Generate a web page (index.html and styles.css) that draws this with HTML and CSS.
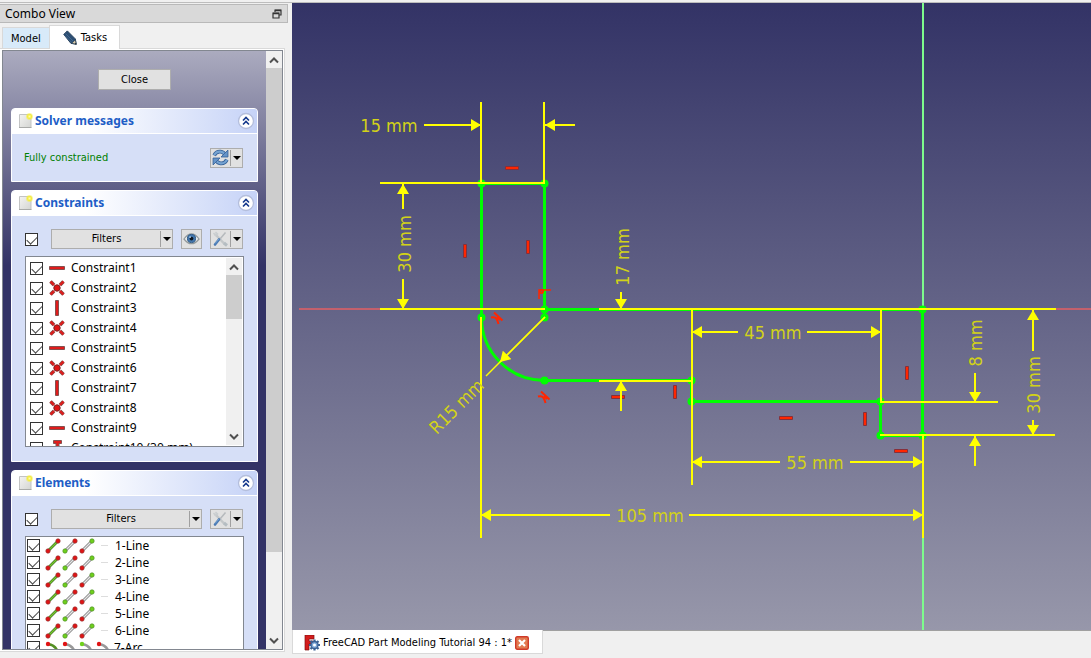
FILE: index.html
```html
<!DOCTYPE html>
<html lang="en">
<head>
<meta charset="utf-8">
<title>FreeCAD</title>
<link rel="stylesheet" href="styles.css">
</head>
<body>
<svg class="defs" aria-hidden="true">
  <defs>
    <linearGradient id="paper" x1="0" y1="0" x2="1" y2="1"><stop offset="0" stop-color="#f4f4f2"/><stop offset="1" stop-color="#d4d5d2"/></linearGradient>
    <radialGradient id="glow"><stop offset="0" stop-color="#fffbb0"/><stop offset=".5" stop-color="#f6ee3c"/><stop offset="1" stop-color="#f6ee3c" stop-opacity="0"/></radialGradient>
    <symbol id="i-page" viewBox="0 0 16 16"><path d="M1.500 1.500h11.500v13h-11.500z" fill="url(#paper)" stroke="#c3c4c4"/><path d="M1 14.500h12.500" stroke="#a9aaa8"/><circle cx="11.500" cy="3.500" r="4" fill="url(#glow)"/></symbol>
    <symbol id="i-up" viewBox="0 0 18 18"><circle cx="9" cy="9" r="7.500" fill="#fff" stroke="#b4bedc" stroke-width="1.300"/><path d="M6 8.500l3-3 3 3M6 12.500l3-3 3 3" fill="none" stroke="#14388c" stroke-width="1.600"/></symbol>
    <symbol id="i-h" viewBox="0 0 16 16"><path d="M.5 6.500h15v3h-15z" fill="#e01c1c" stroke="#85504f"/></symbol>
    <symbol id="i-v" viewBox="0 0 16 16"><path d="M6.500.5v15h3v-15z" fill="#e01c1c" stroke="#85504f"/></symbol>
    <symbol id="i-x" viewBox="0 0 16 16"><path d="M1.500 1.500l3.500 3.500M14.500 1.500l-3.500 3.500M1.500 14.500l3.500-3.500M14.500 14.500l-3.500-3.500" stroke="#8a4643" stroke-width="3.600"/><path d="M1.500 1.500l3.500 3.500M14.500 1.500l-3.500 3.500M1.500 14.500l3.500-3.500M14.500 14.500l-3.500-3.500" stroke="#e01c1c" stroke-width="2"/><circle cx="8" cy="8" r="3.200" fill="#e01414" stroke="#752222"/></symbol>
    <symbol id="i-t" viewBox="0 0 16 16"><path d="M4.500 .5h8v3h-2.500v11h-3v-11h-2.500z" fill="#e01c1c" stroke="#85504f"/></symbol>
    <symbol id="l-edge" viewBox="0 0 16 16"><path d="M3 13L13 3" stroke="#3c6a20" stroke-width="2.600"/><path d="M3 13L13 3" stroke="#76c82c" stroke-width="1.400"/><g fill="#e01414" stroke="#963434" stroke-width=".7"><circle cx="3" cy="13" r="2.200"/><circle cx="13" cy="3" r="2.200"/></g></symbol>
    <symbol id="l-start" viewBox="0 0 16 16"><path d="M3 13L13 3" stroke="#858585" stroke-width="3"/><path d="M3 13L13 3" stroke="#e6e6e6" stroke-width="1.300"/><circle cx="3" cy="13" r="2.200" fill="#6fd01c" stroke="#4f8e28" stroke-width=".7"/><circle cx="13" cy="3" r="2.200" fill="#e01414" stroke="#963434" stroke-width=".7"/></symbol>
    <symbol id="l-end" viewBox="0 0 16 16"><path d="M3 13L13 3" stroke="#858585" stroke-width="3"/><path d="M3 13L13 3" stroke="#e6e6e6" stroke-width="1.300"/><circle cx="3" cy="13" r="2.200" fill="#e01414" stroke="#963434" stroke-width=".7"/><circle cx="13" cy="3" r="2.200" fill="#6fd01c" stroke="#4f8e28" stroke-width=".7"/></symbol>
    <symbol id="a-edge" viewBox="0 0 16 16"><path d="M3 4q8 1 10 9" fill="none" stroke="#548f24" stroke-width="2.500"/><circle cx="3" cy="4" r="2.200" fill="#e01414"/></symbol>
    <symbol id="a-red" viewBox="0 0 16 16"><path d="M3 4q8 1 10 9" fill="none" stroke="#999" stroke-width="2.500"/><circle cx="3" cy="4" r="2.200" fill="#e01414"/></symbol>
    <symbol id="a-green" viewBox="0 0 16 16"><path d="M3 4q8 1 10 9" fill="none" stroke="#999" stroke-width="2.500"/><circle cx="3" cy="4" r="2.200" fill="#6fd01c"/></symbol>
    <symbol id="i-tools" viewBox="0 0 16 16"><path d="M3 3l10 10.500" stroke="#c3c7c9" stroke-width="2.500"/><path d="M1.500 2l2 2.500 2-1.500-2-2" fill="none" stroke="#c9cdcf" stroke-width="1.500"/><path d="M12 12l3 2.500" stroke="#b5bdc2" stroke-width="3"/><path d="M8 8l5.500-6.500" stroke="#b6babd" stroke-width="1.500"/><path d="M3 13.500l4-5" stroke="#4a7ab4" stroke-width="2.600" stroke-linecap="round"/><path d="M3 12.500l4-4.500" stroke="#83add8" stroke-width=".8"/></symbol>
    <symbol id="i-down" viewBox="0 0 12 8"><path d="M2 1.500l4 4 4-4" fill="none" stroke="#505050" stroke-width="2"/></symbol>
    <marker id="tip" markerUnits="userSpaceOnUse" markerWidth="10" markerHeight="12" refX="10" refY="6" orient="auto-start-reverse"><path d="M0 0L10 6L0 12z" fill="#ff0"/></marker>
  </defs>
</svg>

<div class="app">
  <div class="toolbar-edge"></div>
  <aside class="combo">
    <header class="combo-title"><span>Combo View</span>
      <button class="float" aria-label="Float panel"><svg width="10" height="10" viewBox="0 0 10 10"><path d="M3 3V1h6v5H7M1 4h6v5H1z" fill="none" stroke="#333" stroke-width="1.200"/><path d="M3 1.500h6M1 4.500h6" stroke="#333" stroke-width="1.500"/></svg></button>
    </header>
    <nav class="tabs">
      <button class="tab">Model</button>
      <button class="tab tab-on"><svg width="16" height="16" viewBox="0 0 18 18"><path d="M2 5l4-4 9 9 1 6-6-1z" fill="#2c4e73" stroke="#173350"/><path d="M4 4l9 9M3 6l8 8" stroke="#45698f"/><path d="M11 15l4-4 1 5z" fill="#d8c9a8" stroke="#173350" stroke-width=".7"/><path d="M14.500 15.500l1-1 .8 2z" fill="#111"/></svg>Tasks</button>
    </nav>
    <div class="pane">
      <div class="pane-view">
        <div class="tasks">
          <button class="btn close">Close</button>

          <section class="task">
            <h2 class="task-head"><svg class="pic"><use href="#i-page"/></svg><span>Solver messages</span><svg class="fold"><use href="#i-up"/></svg></h2>
            <div class="solver"><span class="ok">Fully constrained</span>
              <button class="btn split" aria-label="Update"><svg width="17" height="17" viewBox="0 0 16 16"><g fill="none" stroke="#376298" stroke-width="3.500"><path d="M2 6q2-4 6-3.500 3 .5 4 2.500"/><path d="M14 10q-2 4-6 3.500-3-.5-4-2.500"/></g><g fill="none" stroke="#76a4d2" stroke-width="2"><path d="M2 6q2-4 6-3.500 3 .5 4 2.500"/><path d="M14 10q-2 4-6 3.500-3-.5-4-2.500"/></g><path d="M15 1v6.500H8.500zM1 15V8.500h6.500z" fill="#6594c8" stroke="#376298" stroke-width=".8"/></svg><i></i></button>
            </div>
          </section>

          <section class="task">
            <h2 class="task-head"><svg class="pic"><use href="#i-page"/></svg><span>Constraints</span><svg class="fold"><use href="#i-up"/></svg></h2>
            <div class="task-body">
              <div class="tools">
                <input class="check" type="checkbox" checked aria-label="All constraints">
                <button class="btn split filters"><span>Filters</span><i></i></button>
                <button class="btn eye" aria-label="Visibility"><svg width="17" height="14" viewBox="0 0 18 14"><path d="M1 7q8-11 16 0-8 10-16 0z" fill="#eceeee" stroke="#939a9c" stroke-width="1.300"/><circle cx="9" cy="6.500" r="4.300" fill="#4477ad" stroke="#2b5685"/><circle cx="9" cy="6.500" r="2" fill="#101820"/><circle cx="7.500" cy="5" r="1" fill="#b9d6ee"/></svg></button>
                <button class="btn split" aria-label="Settings"><svg width="16" height="16"><use href="#i-tools"/></svg><i></i></button>
              </div>
              <div class="list constraints">
                <div class="rows">
                  <label class="row"><input class="check" type="checkbox" checked><svg class="pic"><use href="#i-h"/></svg>Constraint1</label>
                  <label class="row"><input class="check" type="checkbox" checked><svg class="pic"><use href="#i-x"/></svg>Constraint2</label>
                  <label class="row"><input class="check" type="checkbox" checked><svg class="pic"><use href="#i-v"/></svg>Constraint3</label>
                  <label class="row"><input class="check" type="checkbox" checked><svg class="pic"><use href="#i-x"/></svg>Constraint4</label>
                  <label class="row"><input class="check" type="checkbox" checked><svg class="pic"><use href="#i-h"/></svg>Constraint5</label>
                  <label class="row"><input class="check" type="checkbox" checked><svg class="pic"><use href="#i-x"/></svg>Constraint6</label>
                  <label class="row"><input class="check" type="checkbox" checked><svg class="pic"><use href="#i-v"/></svg>Constraint7</label>
                  <label class="row"><input class="check" type="checkbox" checked><svg class="pic"><use href="#i-x"/></svg>Constraint8</label>
                  <label class="row"><input class="check" type="checkbox" checked><svg class="pic"><use href="#i-h"/></svg>Constraint9</label>
                  <label class="row"><input class="check" type="checkbox" checked><svg class="pic"><use href="#i-t"/></svg>Constraint10 (30 mm)</label>
                </div>
                <div class="scroll"><svg class="arrow flip"><use href="#i-down"/></svg><div class="thumb thumb-short"></div><svg class="arrow last"><use href="#i-down"/></svg></div>
              </div>
            </div>
          </section>

          <section class="task">
            <h2 class="task-head"><svg class="pic"><use href="#i-page"/></svg><span>Elements</span><svg class="fold"><use href="#i-up"/></svg></h2>
            <div class="task-body">
              <div class="tools">
                <input class="check" type="checkbox" checked aria-label="All elements">
                <button class="btn split filters"><span>Filters</span><i></i></button>
                <button class="btn split" aria-label="Settings"><svg width="16" height="16"><use href="#i-tools"/></svg><i></i></button>
              </div>
              <div class="list elements">
                <div class="rows">
                  <label class="row"><input class="check" type="checkbox" checked><svg class="pic"><use href="#l-edge"/></svg><svg class="pic"><use href="#l-start"/></svg><svg class="pic"><use href="#l-end"/></svg><b class="dash"></b>1-Line</label>
                  <label class="row"><input class="check" type="checkbox" checked><svg class="pic"><use href="#l-edge"/></svg><svg class="pic"><use href="#l-start"/></svg><svg class="pic"><use href="#l-end"/></svg><b class="dash"></b>2-Line</label>
                  <label class="row"><input class="check" type="checkbox" checked><svg class="pic"><use href="#l-edge"/></svg><svg class="pic"><use href="#l-start"/></svg><svg class="pic"><use href="#l-end"/></svg><b class="dash"></b>3-Line</label>
                  <label class="row"><input class="check" type="checkbox" checked><svg class="pic"><use href="#l-edge"/></svg><svg class="pic"><use href="#l-start"/></svg><svg class="pic"><use href="#l-end"/></svg><b class="dash"></b>4-Line</label>
                  <label class="row"><input class="check" type="checkbox" checked><svg class="pic"><use href="#l-edge"/></svg><svg class="pic"><use href="#l-start"/></svg><svg class="pic"><use href="#l-end"/></svg><b class="dash"></b>5-Line</label>
                  <label class="row"><input class="check" type="checkbox" checked><svg class="pic"><use href="#l-edge"/></svg><svg class="pic"><use href="#l-start"/></svg><svg class="pic"><use href="#l-end"/></svg><b class="dash"></b>6-Line</label>
                  <label class="row"><input class="check" type="checkbox" checked><svg class="pic"><use href="#a-edge"/></svg><svg class="pic"><use href="#a-red"/></svg><svg class="pic"><use href="#a-green"/></svg><svg class="pic"><use href="#a-red"/></svg><span class="arc-name">7-Arc</span></label>
                </div>
              </div>
            </div>
          </section>
        </div>
        <div class="scroll"><svg class="arrow flip"><use href="#i-down"/></svg><div class="thumb thumb-long"></div><svg class="arrow last"><use href="#i-down"/></svg></div>
      </div>
    </div>
  </aside>

  <main class="view">
    <svg class="sketch" viewBox="292 3 799 627" preserveAspectRatio="xMidYMid slice" role="img" aria-label="Sketch with dimensions">
      <path d="M299 309H1300" stroke="#c4606c" stroke-width="2"/>
      <path d="M923-200V900" stroke="#7dfc8c" stroke-width="2"/>
      <g fill="none" stroke="#0f0" stroke-width="3">
        <path d="M481.500 317V183.500H544.500V317M544 309.500H922.500V435.500H880.500V401.500H691.500V380.500H544.500A63 63 0 0 1 481.500 317.500"/>
      </g>
      <g fill="#0f0">
        <circle cx="481.500" cy="183.500" r="4"/><circle cx="544.500" cy="183.500" r="4"/><circle cx="481.500" cy="317.500" r="4"/><circle cx="544.500" cy="309.500" r="4"/><circle cx="544.500" cy="317.500" r="4"/><circle cx="544.500" cy="380.500" r="4"/><circle cx="691.500" cy="380.500" r="4"/><circle cx="691.500" cy="401.500" r="4"/><circle cx="880.500" cy="401.500" r="4"/><circle cx="880.500" cy="435.500" r="4"/><circle cx="922.500" cy="435.500" r="4"/><circle cx="922.500" cy="309.500" r="4"/>
      </g>
      <g fill="#ff2600" stroke="#85303c">
        <path d="M505.500 166.500h13v3h-13zM611.500 395.500h13v3h-13zM779.500 416.500h13v3h-13zM894.500 449.500h13v3h-13zM463.500 244.500h3v13h-3zM526.500 240.500h3v13h-3zM673.500 385.500h3v13h-3zM905.500 366.500h3v13h-3zM863.500 412.500h3v13h-3z"/>
      </g>
      <g fill="none" stroke="#ff2600" stroke-width="2">
        <path d="M539 299v-9h12" stroke-width="1.500"/><circle cx="541.500" cy="291.500" r="1.500"/>
        <path d="M491 317.500q4-1 5.500 1.500t2 5M494 312.500l8.500 8M497 317l3 3"/>
        <path d="M538 396.500q4-1 5.500 1.500t2 5M541 391.500l8.500 8M544 396l3 3"/>
      </g>
      <g fill="none" stroke="#ff0" stroke-width="2">
        <path d="M481 102V184M544 102V184M380 183H545M380 309H545M599 309H1056M599 381H692M481 317V538M692 309V485M881 309V402H998M880 435H1055M923 435V538"/>
        <g marker-end="url(#tip)">
          <path d="M424 125H481"/><path d="M575 125H545"/><path d="M403 209V184"/><path d="M403 279V309"/><path d="M621 292V309"/><path d="M621 411V381"/><path d="M738 332H692"/><path d="M807 332H881"/><path d="M975 373V402"/><path d="M975 466V436"/><path d="M1033 351V310"/><path d="M1033 420V435"/><path d="M780 462H692"/><path d="M850 462H923"/><path d="M610 515H481"/><path d="M689 515H923"/>
        </g>
        <path d="M545 317L486 376" stroke-width="1.500"/><path d="M545 317L500 362" stroke-width="1.500" marker-end="url(#tip)"/>
      </g>
      <g class="dims">
        <text x="389" y="132">15 mm</text>
        <text x="773" y="339">45 mm</text>
        <text x="815" y="469">55 mm</text>
        <text x="650" y="522">105 mm</text>
        <text transform="translate(411 244) rotate(-90)">30 mm</text>
        <text transform="translate(629 257) rotate(-90)">17 mm</text>
        <text transform="translate(982 343) rotate(-90)">8 mm</text>
        <text transform="translate(1040 385) rotate(-90)">30 mm</text>
        <text transform="translate(461 411) rotate(-45)">R15 mm</text>
      </g>
    </svg>
  </main>

  <footer class="docs">
    <div class="doc-tab"><svg width="16" height="16" viewBox="0 0 16 16"><path d="M1 0h9v4H5v2h4v3H5v6H1z" fill="#d41c1c" stroke="#7c1010" stroke-width=".7"/><g stroke="#3c6194"><path d="M10.500 4.500v11M5 10h11M6.500 6l8 8M14.500 6l-8 8" stroke-width="2.200"/><circle cx="10.500" cy="10" r="3.500" fill="#7ea6d6" stroke-width="1.300"/></g><circle cx="10.500" cy="10" r="1.500" fill="#fff"/></svg><span>FreeCAD Part Modeling Tutorial 94 : 1*</span>
      <button class="doc-close" aria-label="Close document"><svg width="14" height="14" viewBox="0 0 14 14"><rect x=".7" y=".7" width="12.600" height="12.600" rx="1.500" fill="#e27a50" stroke="#cf3a28" stroke-width="1.400"/><path d="M4 4l6 6M10 4l-6 6" stroke="#fff" stroke-width="2.200"/></svg></button></div>
  </footer>
</div>
</body>
</html>
```
FILE: styles.css
```css
* { box-sizing: border-box; }
body {
  margin: 0;
  background: #f0f0f0;
  color: #000;
  font: 11px/16px "DejaVu Sans Condensed", "Noto Sans", sans-serif;
}
button { font: inherit; color: inherit; padding: 0; margin: 0; border: 0; background: none; }
svg { display: block; flex: none; }
.defs { position: absolute; width: 0; height: 0; }

.app {
  display: grid;
  grid-template: 3px minmax(0, 1fr) 28px / 292px minmax(0, 1fr);
  height: 100vh;
  overflow: hidden;
}
.toolbar-edge { grid-column: 1 / 3; border-bottom: 1px solid #bdbdbd; }

/* Combo view */
.combo {
  grid-row: 2 / 4;
  display: flex;
  flex-direction: column;
  padding: 1px 7px 6px 0;
  min-height: 0;
}
.combo-title {
  display: flex;
  align-items: center;
  justify-content: space-between;
  height: 19px;
  margin-right: -3px;
  padding: 0 5px;
  border: 1px solid #b9b9b9;
  border-left: 0;
  background: #d9d9d9;
  font: 12px/16px "Noto Sans", sans-serif;
}
.tabs { display: flex; align-items: flex-end; height: 25px; padding-left: 2px; }
.tab { height: 21px; padding: 1px 8px 0 8px; background: #d8eaf9; border-top: 1px solid #d9d9d9; border-left: 1px solid #d9d9d9; }
.tab-on {
  position: relative;
  z-index: 1;
  display: flex;
  align-items: center;
  gap: 3px;
  height: 24px;
  padding: 0 12px;
  margin-bottom: -1px;
  background: #fff;
  border-right: 1px solid #d9d9d9;
}
.pane { flex: 1; min-height: 0; padding: 1px; background: #fff; border: 1px solid #d9d9d9; border-left: 0; }
.pane-view {
  display: flex;
  height: 100%;
  margin-left: 1px;
  border: 1px solid #828790;
  overflow: hidden;
}
.tasks {
  flex: 1;
  min-width: 0;
  display: flex;
  flex-direction: column;
  gap: 8px;
  padding: 18px 8px 0;
  background: linear-gradient(#ababbf, #333366 215px);
  overflow: hidden;
}
.tasks > * { flex: none; }

.btn { background: #e1e1e1; border: 1px solid #adadad; }
.close { align-self: center; width: 73px; height: 21px; margin-bottom: 10px; }

.task { border-radius: 4px 4px 0 0; background: #d6dff7; border: 1px solid #fff; }
.task-head {
  display: flex;
  align-items: center;
  gap: 1px;
  height: 25px;
  margin: 0;
  padding: 0 2px 0 6px;
  border-bottom: 1px solid #fff;
  border-radius: 3px 3px 0 0;
  background: linear-gradient(90deg, #fff 30%, #c6d3f7);
  color: #215dc6;
  font: bold 12px/16px "Noto Sans", sans-serif;
}
.task-head span { flex: 1; }
.pic { width: 16px; height: 16px; }
.fold { width: 18px; height: 18px; }
.solver {
  display: flex;
  align-items: center;
  justify-content: space-between;
  height: 47px;
  padding: 0 14px 0 12px;
}
.ok { color: #008000; }
.split { display: flex; align-items: center; width: 33px; height: 20px; padding-left: 1px; }
.split i {
  display: grid;
  place-items: center;
  width: 12px;
  height: 16px;
  margin-left: auto;
  border-left: 1px solid #a0a0a0;
}
.split i::before { content: ""; border: 4px solid transparent; border-top-color: #000; border-bottom: 0; }
.task-body { padding: 13px 13px 14px; }
.tools { display: flex; align-items: center; gap: 8px; height: 20px; margin-bottom: 7px; padding-right: 1px; }
.filters { flex: 1; margin-left: 5px; }
.filters span { flex: 1; text-align: center; }
.eye { display: grid; place-items: center; width: 21px; height: 20px; }
.check {
  flex: none;
  appearance: none;
  width: 13px;
  height: 13px;
  margin: 0;
  border: 1px solid #333;
  background: #fff;
  display: grid;
}
.check:checked::before {
  content: "";
  width: 9px;
  height: 5px;
  margin: 2px 1px;
  border: solid #444;
  border-width: 0 0 1px 1px;
  transform: rotate(-45deg);
}

.list { display: flex; background: #fff; border: 1px solid #828790; overflow: hidden; }
.rows { flex: 1; min-width: 0; padding-left: 3px; }
.row { display: flex; align-items: center; white-space: nowrap; font: 12px/16px "Noto Sans", sans-serif; }
.constraints { height: 191px; padding: 1px; }
.constraints .row { height: 20px; gap: 6px; }
.elements { height: 191px; }
.elements .rows { padding-left: 1px; }
.elements .row { height: 17px; gap: 1px; }
.elements .check { margin-right: 4px; }
.dash { width: 7px; height: 1px; margin: 0 6px 0 5px; background: #ddd; }
.arc-name { margin-left: 1px; }

.scroll { flex: none; display: flex; flex-direction: column; align-items: center; width: 16px; background: #f0f0f0; }
.arrow { width: 12px; height: 8px; margin: 5px 0 4px; }
.flip { transform: scaleY(-1); }
.last { margin-top: auto; }
.thumb { width: 100%; background: #cdcdcd; }
.thumb-short { height: 44px; }
.thumb-long { height: 81%; }

/* 3D view */
.view { min-width: 0; min-height: 0; background: linear-gradient(#333366, #9797aa); }
.sketch { width: 100%; height: 100%; }
.dims {
  fill: #d2d218;
  font: 18px "DejaVu Sans Condensed", "Noto Sans", sans-serif;
  text-anchor: middle;
}

/* Document tabs */
.docs { border-top: 1px solid #a0a0a0; }
.doc-tab {
  display: flex;
  align-items: center;
  gap: 3px;
  width: max-content;
  height: 24px;
  margin-top: -1px;
  padding: 2px 13px 0 11px;
  background: #fff;
  border: 1px solid #d9d9d9;
  border-top: 0;
}
.doc-close { display: grid; }
```
